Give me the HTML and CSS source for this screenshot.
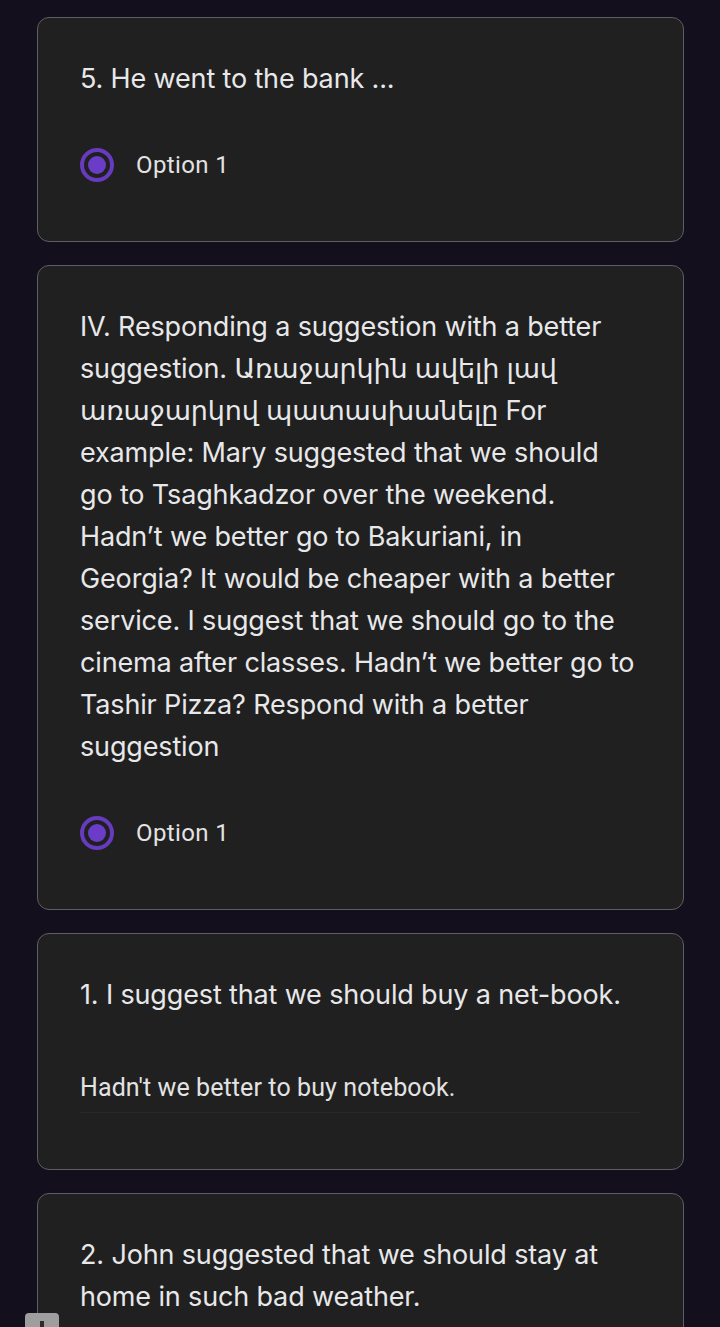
FILE: index.html
```html
<!DOCTYPE html>
<html lang="en">
<head>
<meta charset="utf-8">
<title>Form</title>
<link rel="stylesheet" href="styles.css">
</head>
<body>
<main class="form">
  <section class="card">
    <div class="question">5. He went to the bank ...</div>
    <div class="option">
      <span class="radio"><span class="dot"></span></span>
      <span class="option-label">Option 1</span>
    </div>
  </section>

  <section class="card">
    <div class="question">
      <span class="line">IV. Responding a suggestion with a better</span>
      <span class="line">suggestion. Առաջարկին ավելի լավ</span>
      <span class="line">առաջարկով պատասխանելը For</span>
      <span class="line">example: Mary suggested that we should</span>
      <span class="line">go to Tsaghkadzor over the weekend.</span>
      <span class="line">Hadn’t we better go to Bakuriani, in</span>
      <span class="line">Georgia? It would be cheaper with a better</span>
      <span class="line">service. I suggest that we should go to the</span>
      <span class="line">cinema after classes. Hadn’t we better go to</span>
      <span class="line">Tashir Pizza? Respond with a better</span>
      <span class="line">suggestion</span>
    </div>
    <div class="option">
      <span class="radio"><span class="dot"></span></span>
      <span class="option-label">Option 1</span>
    </div>
  </section>

  <section class="card">
    <div class="question">1. I suggest that we should buy a net-book.</div>
    <div class="answer">Hadn't we better to buy notebook.</div>
  </section>

  <section class="card card-last">
    <div class="question">
      <span class="line">2. John suggested that we should stay at</span>
      <span class="line">home in such bad weather.</span>
    </div>
  </section>
</main>
<div class="handle"><span class="handle-bar"></span></div>
</body>
</html>
```

FILE: styles.css
```css
html, body {
  margin: 0;
  padding: 0;
  background: #130f1d;
}

body {
  height: 1327px;
  overflow: hidden;
  position: relative;
}

.form {
  padding-top: 17px;
  display: flex;
  flex-direction: column;
  gap: 23px;
}

.card {
  margin: 0 36px 0 37px;
  background: #202020;
  border: 1px solid #5f5f63;
  border-radius: 12px;
  padding: 40px 42px 52px 42px;
}

.card-last {
  padding-bottom: 200px;
}

.question {
  font-family: "Inter", "DejaVu Sans", sans-serif;
  font-size: 27px;
  line-height: 42px;
  color: #e8e8ea;
  letter-spacing: -0.15px;
}

.line {
  display: block;
  white-space: nowrap;
}

.option {
  margin-top: 41px;
  height: 48px;
  display: flex;
  align-items: center;
  gap: 22px;
}

.radio {
  width: 34px;
  height: 34px;
  box-sizing: border-box;
  border: 4px solid #673bbf;
  border-radius: 50%;
  display: flex;
  align-items: center;
  justify-content: center;
  flex: none;
}

.dot {
  width: 18px;
  height: 18px;
  border-radius: 50%;
  background: #6a3cc8;
}

.option-label {
  font-family: "Roboto", sans-serif;
  font-size: 24px;
  color: #e3e3e3;
  letter-spacing: 0.4px;
}

.answer {
  margin-top: 56px;
  font-family: "Roboto", sans-serif;
  font-size: 25px;
  line-height: 32px;
  color: #e3e3e3;
  letter-spacing: 0.1px;
  padding-bottom: 8px;
  border-bottom: 1px solid #282828;
  margin-bottom: 4px;
}

.handle {
  position: absolute;
  left: 25px;
  top: 1313px;
  width: 34px;
  height: 24px;
  background: #9e9e9e;
  border-radius: 4px;
}

.handle-bar {
  position: absolute;
  left: 15px;
  top: 8px;
  width: 4px;
  height: 16px;
  background: #2c2c2c;
}
```
